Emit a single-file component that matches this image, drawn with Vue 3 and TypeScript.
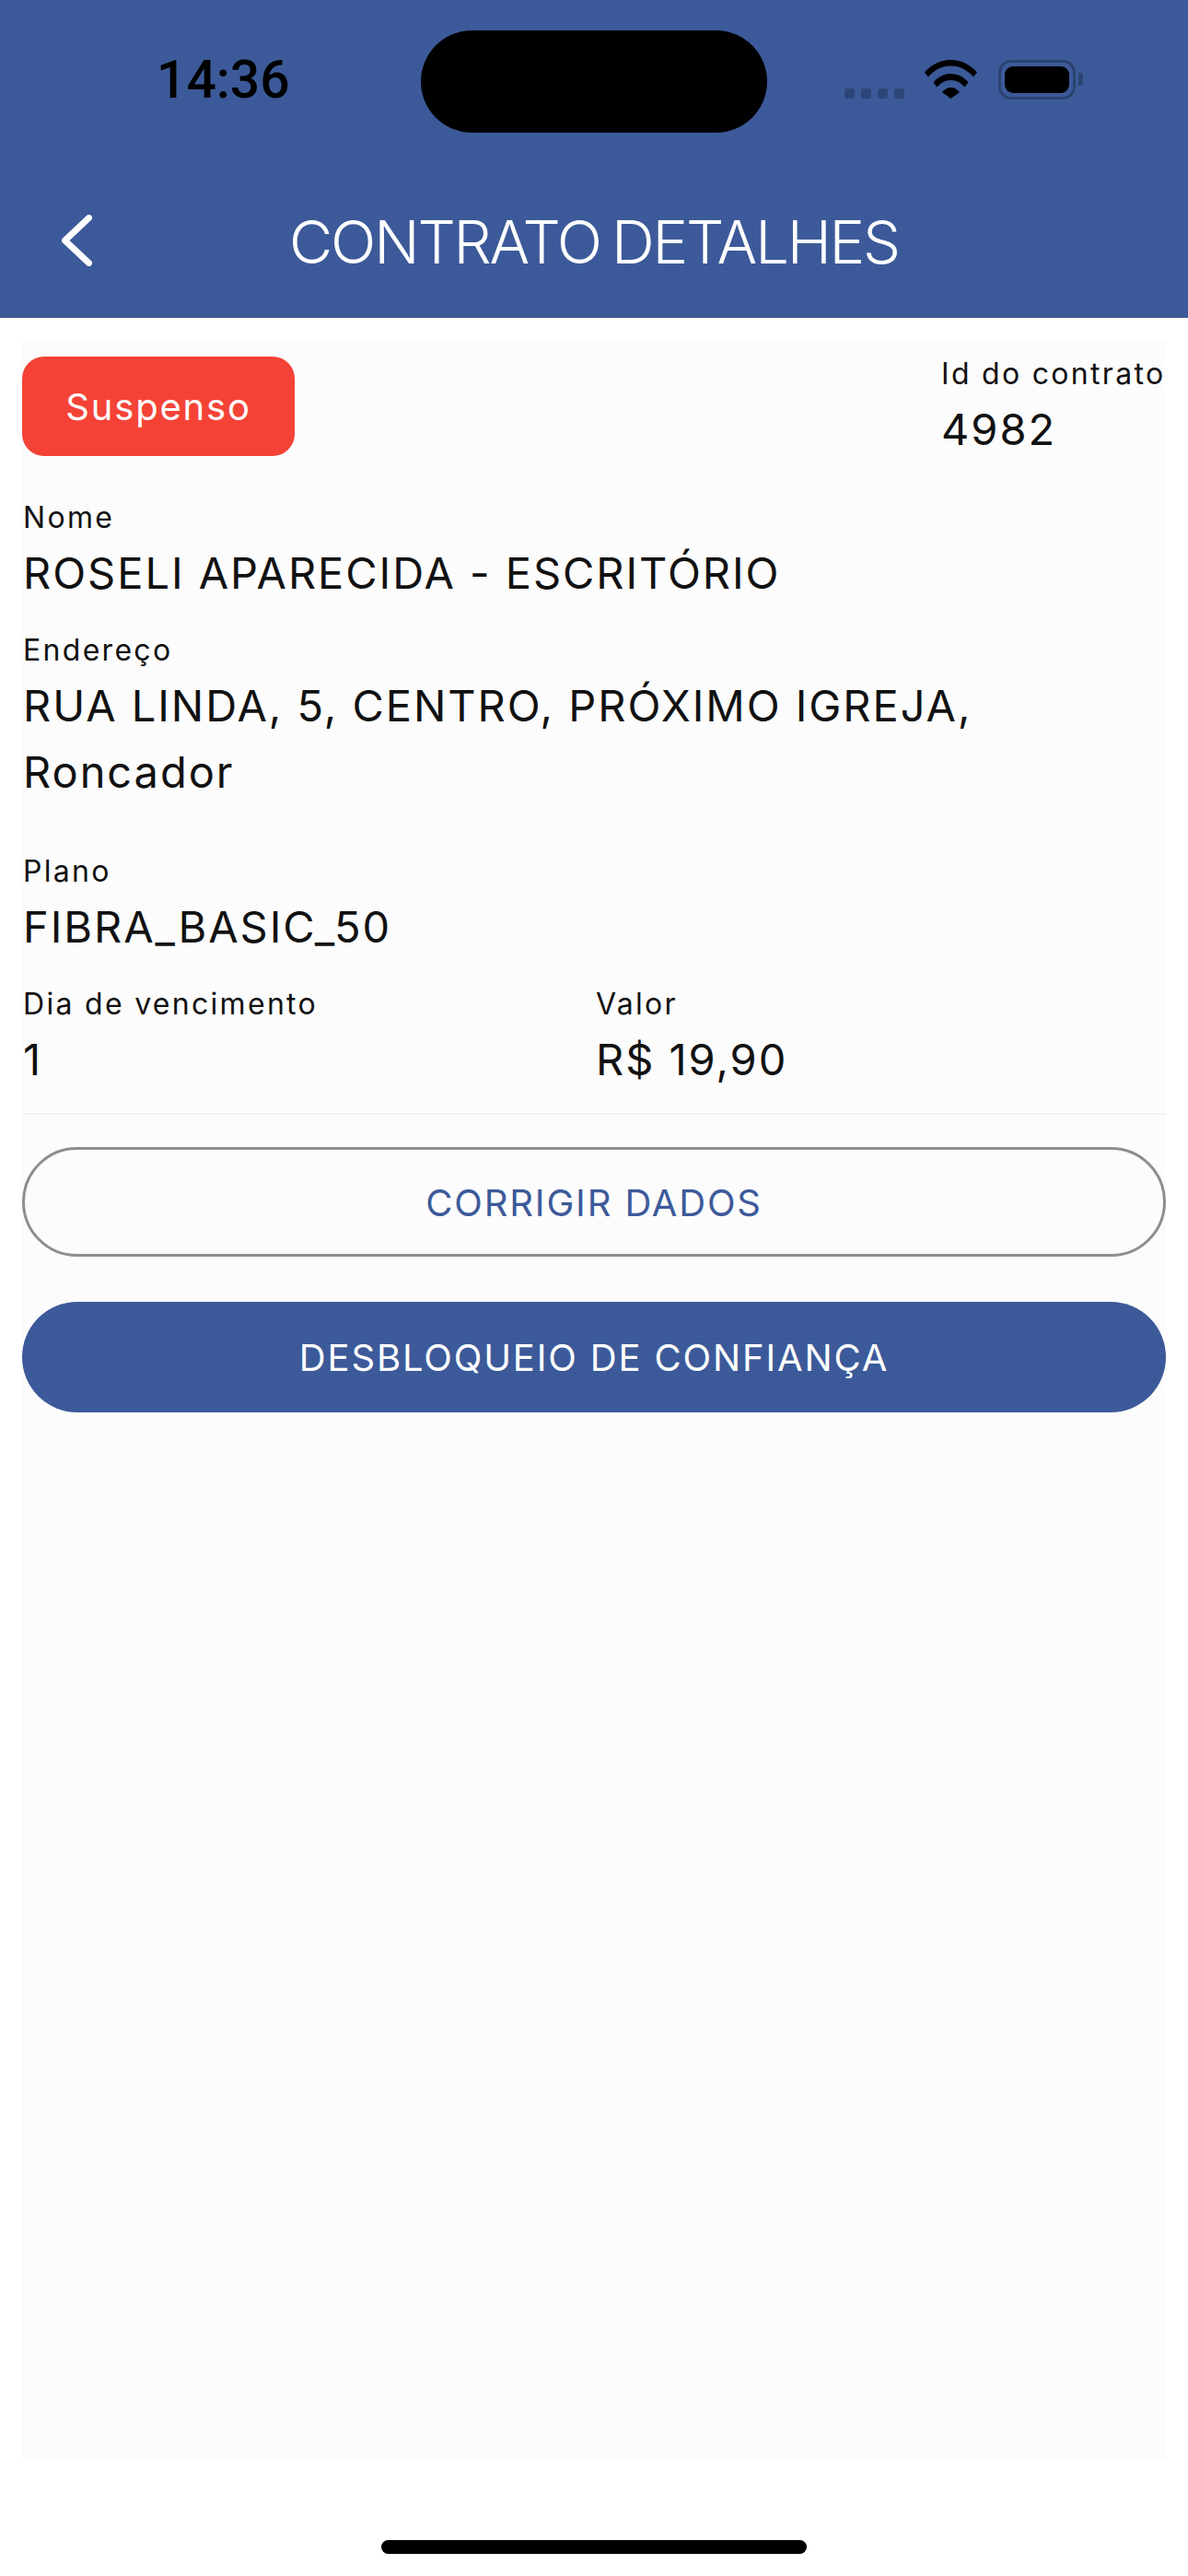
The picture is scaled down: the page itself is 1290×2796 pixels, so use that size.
<script setup lang="ts">
interface Field {
  label: string
  value: string
}

const topFields: Field[] = [
  { label: 'Nome', value: 'ROSELI APARECIDA - ESCRITÓRIO' },
  { label: 'Endereço', value: 'RUA LINDA, 5, CENTRO, PRÓXIMO IGREJA, Roncador' },
  { label: 'Plano', value: 'FIBRA_BASIC_50' },
]
const bottomFields: Field[] = [
  { label: 'Dia de vencimento', value: '1' },
  { label: 'Valor', value: 'R$ 19,90' },
]
const signalDots = [1, 2, 3, 4]
</script>

<template>
  <div class="screen">
    <header class="header">
      <div class="status">
        <span class="time">14:36</span>
        <div class="island"></div>
        <div class="signal">
          <i v-for="d in signalDots" :key="d" class="dot"></i>
        </div>
        <svg class="wifi" viewBox="0 0 57 42" aria-hidden="true">
          <path d="M0 13.5C7.5 5 17.5 0 28.5 0S49.500 5 57 13.500L53 18.500C46.500 11 38 6.500 28.500 6.500S10.500 11 4 18.500Z" />
          <path d="M9.500 24.500C14.500 18.500 21 15 28.500 15S42.500 18.500 47.500 24.500L43.500 29.500C39.500 25 34.500 22 28.500 22S17.500 25 13.500 29.500Z" />
          <path d="M19 35C21.500 32 24.500 30 28.500 30S35.500 32 38 35L28.500 42Z" />
        </svg>
        <div class="battery"><div class="battery-fill"></div></div>
        <div class="battery-cap"></div>
      </div>
      <div class="appbar">
        <svg class="back" viewBox="0 0 33 56" aria-hidden="true">
          <path d="M29.500 3.500L3.500 28L29.500 52.500" />
        </svg>
        <h1 class="title">CONTRATO DETALHES</h1>
      </div>
    </header>

    <main class="card">
      <div class="top-row">
        <div class="badge">Suspenso</div>
        <div class="id-block">
          <div class="label">Id do contrato</div>
          <div class="value">4982</div>
        </div>
      </div>

      <div v-for="f in topFields" :key="f.label" class="field">
        <div class="label">{{ f.label }}</div>
        <div class="value">{{ f.value }}</div>
      </div>

      <div class="two-col">
        <div v-for="f in bottomFields" :key="f.label">
          <div class="label">{{ f.label }}</div>
          <div class="value">{{ f.value }}</div>
        </div>
      </div>

      <div class="divider"></div>

      <button class="btn btn-outline" type="button">CORRIGIR DADOS</button>
      <button class="btn btn-solid" type="button">DESBLOQUEIO DE CONFIANÇA</button>
    </main>

    <div class="home-indicator"></div>
  </div>
</template>

<style scoped>
.screen {
  width: 1290px;
  height: 2796px;
  background: #ffffff;
  display: flex;
  flex-direction: column;
  font-family: Inter, "Liberation Sans", sans-serif;
  color: #111111;
  overflow: hidden;
}
.header {
  height: 345px;
  background: #3c5a99;
  display: flex;
  flex-direction: column;
  flex: none;
}
.status {
  height: 165px;
  position: relative;
  display: flex;
  align-items: flex-start;
  flex: none;
}
.time {
  margin: 55px 0 0 170px;
  font-family: Roboto, sans-serif;
  font-size: 57px;
  line-height: 64px;
  font-weight: 500;
  color: #000;
  width: 747px;
}
.island {
  position: absolute;
  left: 457px;
  top: 33px;
  width: 376px;
  height: 111px;
  border-radius: 56px;
  background: #000;
}
.signal {
  display: flex;
  gap: 7px;
  margin-top: 96px;
  width: 87px;
  flex: none;
}
.dot {
  width: 11px;
  height: 11px;
  border-radius: 3px;
  background: #2d4677;
}
.wifi {
  width: 57px;
  height: 42px;
  margin-top: 65px;
  fill: #000;
  flex: none;
}
.battery {
  width: 84px;
  height: 43px;
  margin: 65px 0 0 23px;
  box-sizing: border-box;
  border: 3px solid #2b4370;
  border-radius: 14px;
  padding: 4px;
  flex: none;
}
.battery-fill {
  width: 100%;
  height: 100%;
  background: #000;
  border-radius: 9px;
}
.battery-cap {
  width: 5px;
  height: 14px;
  margin: 79px 0 0 3px;
  background: #2b4370;
  border-radius: 0 4px 4px 0;
  flex: none;
}
.appbar {
  flex: 1;
  display: flex;
  align-items: flex-start;
}
.back {
  width: 33px;
  height: 56px;
  margin: 68px 0 0 67px;
  fill: none;
  stroke: #fff;
  stroke-width: 7px;
  stroke-linecap: round;
  stroke-linejoin: round;
  flex: none;
}
.title {
  margin: 59px 0 0 214px;
  font-size: 65px;
  line-height: 78px;
  font-weight: 300;
  letter-spacing: -2.2px;
  word-spacing: -4px;
  color: #fff;
  white-space: nowrap;
}
.card {
  flex: none;
  margin: 24px 24px 0;
  height: 2301px;
  background: #fcfcfc;
  padding-top: 18px;
  box-sizing: border-box;
  display: flex;
  flex-direction: column;
}
.top-row {
  display: flex;
  justify-content: space-between;
  align-items: flex-start;
  height: 108px;
  margin-bottom: 44px;
}
.badge {
  width: 296px;
  height: 108px;
  background: #f44336;
  border-radius: 24px;
  color: #fff;
  font-size: 40px;
  font-weight: 400;
  letter-spacing: 1.8px;
  display: flex;
  align-items: center;
  justify-content: center;
}
.id-block {
  margin-top: -4px;
  width: 245px;
  white-space: nowrap;
}
.label {
  font-size: 32px;
  line-height: 45px;
  letter-spacing: 2.3px;
  margin-left: 1px;
  margin-bottom: 2px;
}
.value {
  font-size: 47px;
  line-height: 72px;
  font-weight: 400;
  letter-spacing: 1.95px;
  margin-left: 1px;
}
.field {
  margin-bottom: 25px;
  padding-right: 100px;
}
.field:nth-of-type(3) {
  margin-bottom: 49px;
}
.two-col {
  display: grid;
  grid-template-columns: 622px 1fr;
}
.divider {
  height: 2px;
  background: #f2f2f2;
  margin-top: 22px;
  flex: none;
}
.btn {
  display: block;
  width: 100%;
  height: 120px;
  border-radius: 60px;
  font-family: inherit;
  font-size: 40px;
  font-weight: 400;
  letter-spacing: 1.85px;
  box-sizing: border-box;
  flex: none;
  padding: 0;
}
.btn-outline {
  margin-top: 35px;
  height: 119px;
  padding-top: 2px;
  background: transparent;
  border: 3px solid #8e8e8e;
  color: #3c5a99;
}
.btn-solid {
  margin-top: 49px;
  background: #3c5a99;
  border: none;
  color: #fff;
}
.home-indicator {
  flex: none;
  width: 462px;
  height: 15px;
  margin: 87px auto 0;
  border-radius: 8px;
  background: #000;
}
</style>
